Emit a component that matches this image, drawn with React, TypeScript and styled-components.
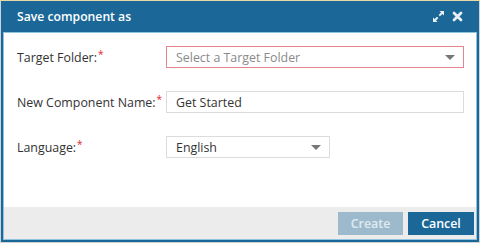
import React from "react";
import styled, { createGlobalStyle } from "styled-components";

const Global = createGlobalStyle`
  html, body { margin: 0; padding: 0; }
  body { width: 480px; height: 243px; overflow: hidden; background: #cfd3d6; font-family: "Open Sans", "Liberation Sans", sans-serif; }
`;

const Page = styled.div`
  width: 480px;
  height: 243px;
  box-sizing: border-box;
  border-top: 1px solid #e6d7a4;
  padding: 0 1px 1px 1px;
  display: flex;
`;

const Dialog = styled.div`
  flex: 1;
  display: flex;
  flex-direction: column;
  background: #1b6898;
  padding: 0 2px 2px 2px;
`;

const Header = styled.div`
  height: 31px;
  display: flex;
  align-items: center;
  justify-content: space-between;
  padding: 0 14px 0 14px;
  color: #fff;
`;

const Title = styled.div`
  font-size: 12.2px;
  font-weight: 600;
`;

const Tools = styled.div`
  display: flex;
  align-items: center;
  gap: 7px;
`;

const Frame = styled.div`
  flex: 1;
  display: flex;
  flex-direction: column;
  border: 1px solid #8fc3e2;
  background: #fff;
`;

const Body = styled.div`
  flex: 1;
  display: flex;
  flex-direction: column;
  gap: 23px;
  padding: 13px 10px 0 13px;
`;

const Row = styled.div`
  display: flex;
  align-items: center;
  height: 22px;
`;

const Label = styled.div`
  width: 149px;
  font-size: 12.4px;
  color: #333;
  white-space: nowrap;
`;

const Req = styled.span`
  color: #e0242f;
  font-size: 10px;
  position: relative;
  top: -4px;
  margin-left: 1px;
`;

const Box = styled.div<{ $w: number; $error?: boolean }>`
  width: ${(p) => p.$w}px;
  height: 22px;
  box-sizing: border-box;
  border: 1px solid ${(p) => (p.$error ? "#e4858d" : "#dcdcdc")};
  display: flex;
  align-items: center;
  justify-content: space-between;
  padding: 0 8px 0 9px;
  font-size: 12.4px;
  color: #333;
`;

const Placeholder = styled.span`
  color: #8a8a8a;
`;

const Caret = styled.span`
  width: 0;
  height: 0;
  border-left: 5px solid transparent;
  border-right: 5px solid transparent;
  border-top: 5px solid #777;
`;

const Footer = styled.div`
  height: 32px;
  background: #ececec;
  display: flex;
  align-items: center;
  justify-content: flex-end;
  gap: 5px;
  padding: 0 2px 0 0;
`;

const Button = styled.button<{ $disabled?: boolean }>`
  height: 23px;
  width: ${(p) => (p.$disabled ? 65 : 66)}px;
  border: none;
  background: ${(p) => (p.$disabled ? "#9dbacd" : "#1b6898")};
  color: ${(p) => (p.$disabled ? "#e1eaf0" : "#fff")};
  font-family: "Open Sans", "Liberation Sans", sans-serif;
  font-size: 12.4px;
  font-weight: 600;
  padding: 0;
`;

export default function App() {
  return (
    <>
      <Global />
      <Page>
        <Dialog>
          <Header>
            <Title>Save component as</Title>
            <Tools>
              <svg width="13" height="13" viewBox="0 0 13 13">
                <path d="M7.5 1H12v4.5l-1.6-1.6-2.4 2.4-1.4-1.4 2.4-2.4z" fill="#e8f0f6" />
                <path d="M5.5 12H1V7.5l1.6 1.6 2.4-2.4 1.4 1.4-2.4 2.4z" fill="#e8f0f6" />
              </svg>
              <svg width="11" height="11" viewBox="0 0 11 11">
                <path d="M2 2l7 7M9 2l-7 7" stroke="#e8f0f6" strokeWidth="2.8" strokeLinecap="round" />
              </svg>
            </Tools>
          </Header>
          <Frame>
            <Body>
              <Row>
                <Label>Target Folder:<Req>*</Req></Label>
                <Box $w={298} $error>
                  <Placeholder>Select a Target Folder</Placeholder>
                  <Caret />
                </Box>
              </Row>
              <Row>
                <Label>New Component Name:<Req>*</Req></Label>
                <Box $w={298}>Get Started</Box>
              </Row>
              <Row>
                <Label>Language:<Req>*</Req></Label>
                <Box $w={164}>
                  <span>English</span>
                  <Caret />
                </Box>
              </Row>
            </Body>
            <Footer>
              <Button $disabled>Create</Button>
              <Button>Cancel</Button>
            </Footer>
          </Frame>
        </Dialog>
      </Page>
    </>
  );
}
